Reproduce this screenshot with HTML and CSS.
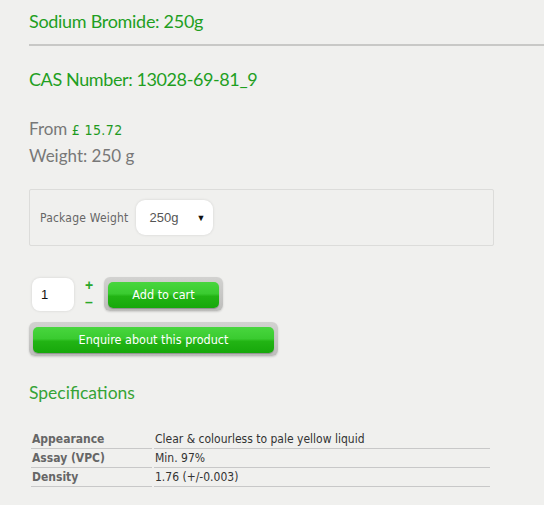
FILE: index.html
```html
<!DOCTYPE html>
<html>
<head>
<meta charset="utf-8">
<link rel="stylesheet" href="styles.css">
</head>
<body>
<div class="page">
  <div class="title-bar">
    <h1 class="title">Sodium Bromide: 250g</h1>
  </div>
  <h2 class="cas">CAS Number: 13028-69-81_9</h2>
  <div class="price-block">
    <div class="price-line">From <span class="price">£ 15.72</span></div>
    <div class="price-line">Weight: 250 g</div>
  </div>
  <div class="options">
    <span class="opt-label">Package Weight</span>
    <div class="select"><span>250g</span><span class="arrow">▼</span></div>
  </div>
  <div class="cart-row">
    <div class="qty">1</div>
    <div class="steps"><span class="plus">+</span><span class="minus">–</span></div>
    <div class="btn-frame"><div class="btn btn-cart">Add to cart</div></div>
  </div>
  <div class="btn-frame enquire-frame"><div class="btn btn-enquire">Enquire about this product</div></div>
  <h3 class="spec-title">Specifications</h3>
  <table class="spec">
    <tr><th>Appearance</th><td>Clear &amp; colourless to pale yellow liquid</td></tr>
    <tr><th>Assay (VPC)</th><td>Min. 97%</td></tr>
    <tr><th>Density</th><td>1.76 (+/-0.003)</td></tr>
  </table>
</div>
</body>
</html>
```
FILE: styles.css
```css
html, body {
  margin: 0;
  padding: 0;
  background: #f0f0ee;
}
.page {
  padding-left: 29px;
  font-family: "DejaVu Sans Condensed", "DejaVu Sans", sans-serif;
}
.title-bar {
  height: 44px;
  border-bottom: 2px solid #c8c8c6;
}
.title, .cas, .spec-title, .price-line {
  font-family: Lato, "Open Sans", sans-serif;
  font-weight: normal;
  margin: 0;
}
.title {
  padding-top: 9px;
  font-size: 18px;
  letter-spacing: -0.3px;
  line-height: 24px;
  color: #1f9f1f;
}
.cas {
  margin-top: 21px;
  font-size: 18px;
  letter-spacing: -0.4px;
  line-height: 24px;
  color: #1f9f1f;
}
.price-block {
  margin-top: 25px;
}
.price-line {
  font-size: 17px;
  line-height: 26px;
  color: #787878;
}
.price {
  font-family: "DejaVu Sans Condensed", "DejaVu Sans", sans-serif;
  font-size: 14px;
  letter-spacing: 0.4px;
  color: #1f9a1f;
}
.options {
  margin-top: 20px;
  height: 55px;
  border: 1px solid #dcdcda;
  border-radius: 2px;
  display: flex;
  align-items: center;
  padding-left: 10px;
  width: 453px;
}
.opt-label {
  font-size: 12px;
  letter-spacing: 0.2px;
  color: #666;
}
.select {
  margin-left: 8px;
  width: 77px;
  height: 35px;
  box-sizing: border-box;
  background: #fff;
  border-radius: 9px;
  box-shadow: 0 0 3px rgba(0,0,0,0.12);
  display: flex;
  align-items: center;
  justify-content: space-between;
  padding: 0 8px 0 13px;
  font-family: "Liberation Sans", sans-serif;
  font-size: 13px;
  color: #555;
}
.arrow {
  font-size: 9px;
  color: #111;
}
.cart-row {
  margin-top: 31px;
  display: flex;
  align-items: center;
  height: 34px;
}
.qty {
  margin-left: 3px;
  width: 42px;
  height: 33px;
  box-sizing: border-box;
  background: #fff;
  border-radius: 8px;
  box-shadow: 0 0 3px rgba(0,0,0,0.12);
  padding-left: 9px;
  line-height: 33px;
  font-family: "Liberation Sans", sans-serif;
  font-size: 13px;
  color: #111;
}
.steps {
  display: flex;
  flex-direction: column;
  align-items: center;
  width: 30px;
  font-family: "Liberation Sans", sans-serif;
  font-size: 14px;
  line-height: 17px;
  color: #2aa82a;
  font-weight: bold;
}
.btn-frame {
  padding: 5px 4px 3px 4px;
  border-radius: 6px;
  background: linear-gradient(#d2d2d0, #bdbdbb);
  box-shadow: 0 1px 2px rgba(0,0,0,0.15);
}
.btn {
  height: 26px;
  line-height: 26px;
  text-align: center;
  color: #fff;
  font-size: 12.5px;
  border-radius: 5px;
  background: linear-gradient(#48d63e 0%, #3acb30 45%, #22b414 55%, #17a80b 100%);
  box-shadow: 0 1px 1px rgba(0,0,0,0.25);
}
.btn-cart {
  width: 111px;
}
.enquire-frame {
  display: inline-block;
  margin-top: 11px;
}
.btn-enquire {
  width: 241px;
}
.spec-title {
  margin-top: 25px;
  font-size: 17.5px;
  line-height: 24px;
  color: #36a336;
}
.spec {
  margin-top: 25px;
  border-collapse: separate;
  border-spacing: 2px 0;
  width: 463px;
}
.spec th, .spec td {
  font-size: 12px;
  height: 18px;
  line-height: 18px;
  padding: 0 1px;
  border-bottom: 1px solid #c8c8c8;
  text-align: left;
  vertical-align: bottom;
}
.spec th {
  width: 119px;
  color: #666;
  font-weight: bold;
}
.spec td {
  color: #333;
}
```
